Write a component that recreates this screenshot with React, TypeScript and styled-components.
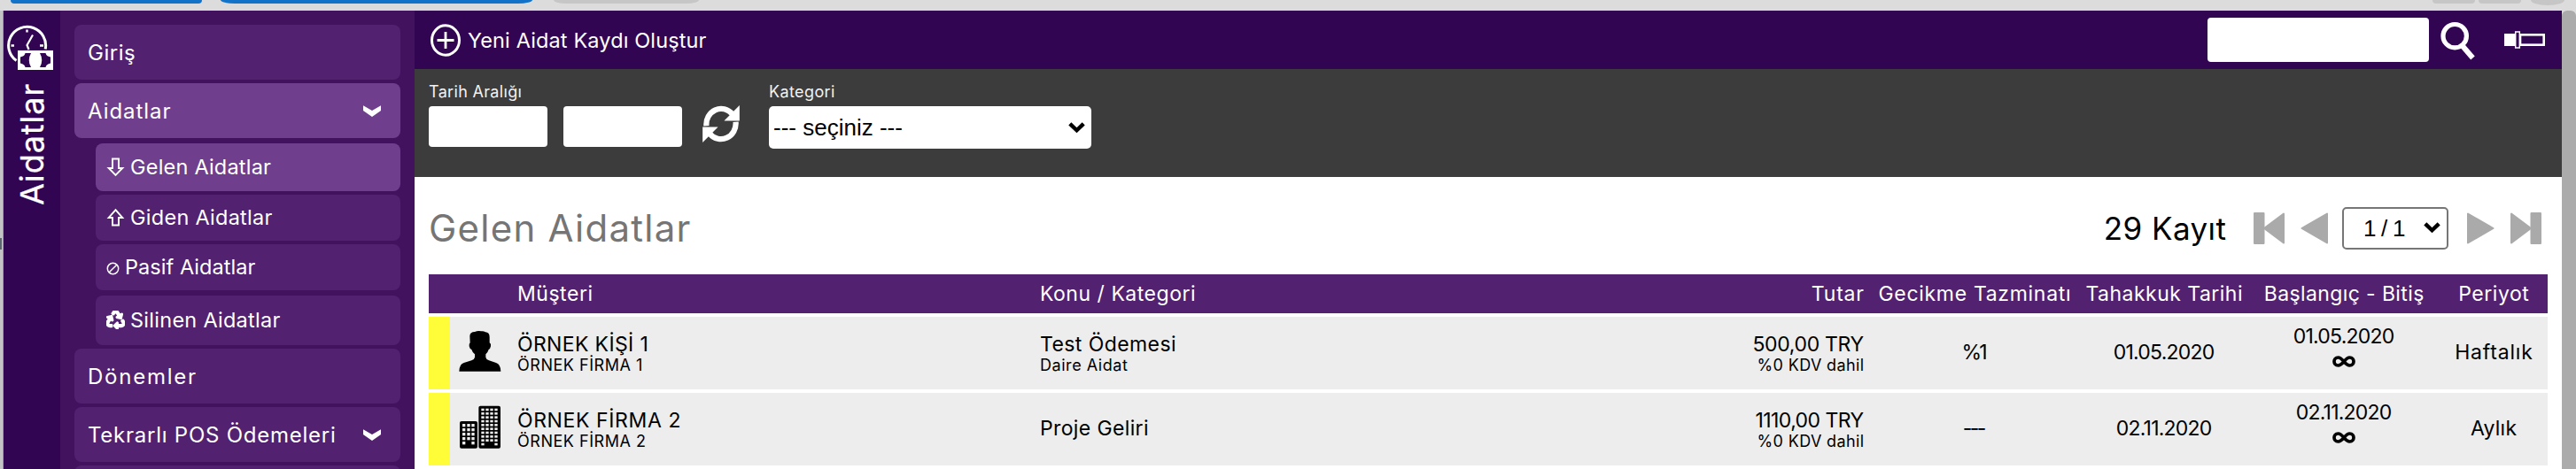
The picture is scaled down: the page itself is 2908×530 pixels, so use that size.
import React from 'react';
import styled, { createGlobalStyle } from 'styled-components';
import { FaRecycle } from 'react-icons/fa';

const GlobalStyle = createGlobalStyle`
  * { box-sizing: border-box; }
  body { margin: 0; background: #fff; font-family: Inter, 'Liberation Sans', sans-serif; }
  svg { display: block; flex: none; }
`;

const Page = styled.div`
  width: 2908px;
  height: 530px;
  overflow: hidden;
  display: flex;
  flex-direction: column;
  background: #dcdcdc;
`;

const TabStrip = styled.div`
  height: 12px;
  flex: none;
  display: flex;
  align-items: flex-start;
  padding-left: 12px;
`;

const TabEnd = styled.div<{ $w: number; $h?: number; $ml?: number; $color: string; $round: string }>`
  width: ${p => p.$w}px;
  height: ${p => p.$h ?? 4}px;
  margin-left: ${p => p.$ml ?? 0}px;
  background: ${p => p.$color};
  border-radius: ${p => p.$round};
`;

const Spacer = styled.div`
  flex: 1;
`;

const Body = styled.div`
  flex: 1;
  min-height: 0;
  display: flex;
`;

const WindowEdge = styled.div`
  width: 4px;
  padding-top: 257px;
  background: linear-gradient(90deg, #c3c3c5 0 3px, #a0a0a4 3px 4px);
`;

const EdgeMark = styled.div`
  width: 2px;
  height: 13px;
  background: #5b6570;
`;

const Rail = styled.div`
  width: 64px;
  background: #320553;
  display: flex;
  flex-direction: column;
  align-items: flex-start;
  padding: 16px 0 0 4px;
`;

const RailTitle = styled.div`
  writing-mode: vertical-rl;
  transform: rotate(180deg);
  margin: 14px 0 0 8px;
  color: #fff;
  font-size: 36px;
  line-height: 40px;
  letter-spacing: 0.97px;
  -webkit-text-stroke: 0.3px #fff;
`;

const Sidebar = styled.nav`
  width: 400px;
  background: #43125f;
  padding: 16px 16px 0;
`;

const MenuItem = styled.div<{ $active?: boolean }>`
  height: 62px;
  margin-bottom: 4px;
  padding: 0 22px 0 15px;
  border-radius: 8px;
  background: ${p => (p.$active ? '#6f3f8e' : '#522170')};
  display: flex;
  align-items: center;
  justify-content: space-between;
  color: #fff;
  font-size: 24px;
`;

const SubMenu = styled.div`
  margin: 6px 0 4px 24px;
  display: flex;
  flex-direction: column;
`;

const SubItem = styled.div<{ $active?: boolean; $h: number; $gap?: number }>`
  height: ${p => p.$h}px;
  margin-bottom: ${p => p.$gap ?? 0}px;
  padding: 0 0 1px 12px;
  border-radius: 8px;
  background: ${p => (p.$active ? '#6f3f8e' : '#522170')};
  display: flex;
  align-items: center;
  color: #fff;
  font-size: 23.5px;
`;

const SubIcon = styled.span<{ $w: number }>`
  width: ${p => p.$w}px;
`;

const Tracked = styled.span<{ $t: number }>`
  letter-spacing: ${p => p.$t}px;
  margin-right: ${p => -p.$t}px;
  white-space: nowrap;
`;

const Main = styled.main`
  width: 2424px;
  background: #fff;
`;

const TopBar = styled.header`
  height: 66px;
  padding: 0 19px 0 17px;
  background: #320553;
  display: flex;
  align-items: center;
  color: #fff;
`;

const CreateLink = styled.div`
  display: flex;
  align-items: center;
  gap: 8px;
  font-size: 23.5px;
`;

const Field = styled.div<{ $w: number; $h: number }>`
  width: ${p => p.$w}px;
  height: ${p => p.$h}px;
  border-radius: 4px;
  background: #fff;
`;

const SearchIcon = styled.div`
  margin: 2px 32px 0 13px;
`;

const FilterBar = styled.section`
  height: 122px;
  padding: 16px 16px 0;
  background: #3c3c3c;
  display: flex;
  color: #f2f2f2;
`;

const FilterGroup = styled.div`
  margin-right: 33px;
`;

const FilterLabel = styled.div`
  height: 26px;
  line-height: 20px;
  font-size: 18px;
`;

const Fields = styled.div`
  display: flex;
  gap: 18px;
`;

const RefreshIcon = styled.div`
  margin: -1px 0 0 5px;
`;

const Select = styled.div<{ $w: number; $bordered?: boolean }>`
  width: ${p => p.$w}px;
  height: 48px;
  padding: 0 7px 0 ${p => (p.$bordered ? 22 : 5)}px;
  border: ${p => (p.$bordered ? '2px solid #767676' : '0')};
  border-radius: 5px;
  background: #fff;
  display: flex;
  align-items: center;
  justify-content: space-between;
  color: #000;
  font: 26px/44px 'Liberation Sans', sans-serif;
`;

const TitleRow = styled.div`
  height: 110px;
  padding: 5px 23px 0 16px;
  display: flex;
  align-items: center;
`;

const Title = styled.h1`
  margin: 0;
  flex: 1;
  font-size: 42px;
  font-weight: 400;
  color: #757575;
`;

const Count = styled.div`
  font-size: 35px;
  margin-right: 31px;
`;

const Pager = styled.div`
  display: flex;
  align-items: center;
`;

const PagerButton = styled.span<{ $mr: number }>`
  margin-right: ${p => p.$mr}px;
`;

const Table = styled.div`
  margin: 0 16px;
  display: flex;
  flex-direction: column;
  gap: 4px;
`;

const TableRow = styled.div<{ $head?: boolean }>`
  height: ${p => (p.$head ? 44 : 82)}px;
  background: ${p => (p.$head ? '#522170' : '#ededed')};
  color: ${p => (p.$head ? '#fff' : '#000')};
  display: grid;
  grid-template-columns: 24px 76px 590px 589px 341px 250px 178px 228px 110px;
  font-size: 23px;
`;

const Marker = styled.div<{ $on?: boolean }>`
  background: ${p => (p.$on ? '#fffd38' : 'transparent')};
`;

const IconCell = styled.div`
  display: flex;
  align-items: center;
  padding: 0 0 5px 10px;
`;

const Cell = styled.div<{ $align?: string; $shift?: number }>`
  display: flex;
  flex-direction: column;
  justify-content: center;
  align-items: ${p => p.$align ?? 'flex-start'};
  line-height: 28px;
  padding-top: ${p => Math.max(0, p.$shift ?? 0)}px;
  padding-bottom: ${p => Math.max(0, -(p.$shift ?? 0))}px;
`;

const Small = styled.div`
  font-size: 18px;
  line-height: 20px;
`;

const Infinite = styled.div`
  height: 30px;
  display: flex;
  align-items: center;
`;

const Scrollbar = styled.div`
  width: 16px;
  border-radius: 6px 6px 0 0;
  background: #ababab;
`;

const T = ({ t, children }: { t: number; children: React.ReactNode }) => <Tracked $t={t}>{children}</Tracked>;

const MenuChevron = () => (
  <svg width="20" height="13" viewBox="0 0 60 39" fill="#fff">
    <path d="M0 1 30 18 60 1V18L30 39 0 18Z" />
  </svg>
);

const SelectChevron = () => (
  <svg width="19" height="13" viewBox="0 0 19 13" fill="none" stroke="#000" strokeWidth="4.4">
    <path d="M1.8 1.8 9.5 9.3 17.2 1.8" />
  </svg>
);

const ClockMoney = () => (
  <svg width="52" height="52" viewBox="0 0 52 52" fill="none" stroke="#fff">
    <path d="M10.5 40.5A21 21 0 1 1 43.2 27.5" strokeWidth="3" />
    <path d="M22.5 5.5v3M4.5 23.5h3.5M37 23.5h4" strokeWidth="2.4" />
    <path d="M29 11.5 22.5 23 24.5 28" strokeWidth="2.2" />
    <rect x="12" y="29" width="40" height="22" fill="#fff" stroke="none" />
    <path d="M20.5 32H27Q22.5 40 27 48H20.5Q20 44.5 15 43.5V36.500Q20 35.5 20.5 32Z" fill="#320553" stroke="none" />
    <path d="M43.5 32H37Q41.5 40 37 48H43.5Q44 44.5 49 43.5V36.500Q44 35.5 43.5 32Z" fill="#320553" stroke="none" />
  </svg>
);

const PlusCircle = () => (
  <svg width="35" height="37" viewBox="0 0 35 37" fill="none" stroke="#fff">
    <ellipse cx="18" cy="18.5" rx="15.5" ry="16.7" strokeWidth="3" />
    <path d="M18 9v19M8.500 18.5h19" strokeWidth="2.8" />
  </svg>
);

const Refresh = () => (
  <svg width="42" height="42" viewBox="0 0 127 128" fill="none" stroke="#fff">
    <path d="M13 71A51 54 0 0 1 102 30M114 57A51 54 0 0 1 25 98" strokeWidth="19" />
    <path d="M127 0V53H74ZM0 128V75H53Z" fill="#fff" stroke="none" />
  </svg>
);

const Magnifier = () => (
  <svg width="40" height="44" viewBox="0 0 40 44" fill="none" stroke="#fff">
    <circle cx="16.2" cy="16.7" r="13.2" strokeWidth="5.2" />
    <path d="M24.5 27.5 36.5 41.5" strokeWidth="6" />
  </svg>
);

const SliderIcon = () => (
  <svg width="46" height="20" viewBox="0 0 46 20" fill="none" stroke="#fff">
    <rect x="0" y="3" width="13" height="14" fill="#fff" stroke="none" />
    <rect x="18" y="4.3" width="26.7" height="11.4" strokeWidth="2.6" />
    <rect x="12.7" y="1" width="4.6" height="18" fill="#320553" strokeWidth="1.5" />
  </svg>
);

const HollowArrow = ({ up }: { up?: boolean }) => (
  <svg width="21" height="22" viewBox="0 0 21 22" fill="none" stroke="#fff" strokeWidth="1.9">
    <path d={up ? 'M10.5 2.2 18.3 11H14V19.5H7V11H2.7Z' : 'M10.5 19.8 18.3 12H14V1.5H7V12H2.7Z'} />
  </svg>
);

const Slashed = () => (
  <svg width="15" height="18" viewBox="0 0 15 18" fill="none" stroke="#fff" strokeWidth="1.5">
    <circle cx="7.5" cy="10.5" r="6.2" />
    <path d="M3.2 14.8 11.8 6.2" />
  </svg>
);

const PagerArrow = ({ kind }: { kind: 'first' | 'prev' | 'next' | 'last' }) => {
  const bar = kind === 'first' || kind === 'last';
  const w = bar ? 35 : 31;
  const flip = kind === 'next' || kind === 'last';
  return (
    <svg width={w} height="36" viewBox={`0 0 ${w} 36`} fill="#aaa" stroke="#aaa" strokeLinejoin="round">
      <g transform={flip ? `translate(${w} 0) scale(-1 1)` : undefined}>
        {bar ? (
          <>
            <path d="M1 1H11.5V35H1Z" strokeWidth="2" />
            <path d="M34 1.5V34.5L12 18Z" strokeWidth="2" />
          </>
        ) : (
          <path d="M30 1.5V34.5L1.5 18Z" strokeWidth="2" />
        )}
      </g>
    </svg>
  );
};

const Person = () => (
  <svg width="48" height="48" viewBox="0 0 144 144" fill="#000">
    <path d="M37 20Q38 6 54 6Q64 1 76 4Q84 3 90 7Q104 8 104 24V43Q110 46 108 55Q106 65 101 66Q98 76 91 82V92Q92 99 102 103L126 111Q142 117 142 140H1Q1 117 17 111L43 103Q53 99 54 92V82Q46 76 43 66Q37 65 35 55Q34 46 38 43Z" />
  </svg>
);

const rowsOf = (n: number, start: number, step: number) => Array.from({ length: n }, (_, i) => start + i * step);

const Buildings = () => (
  <svg width="48" height="50" viewBox="0 0 144 150">
    <rect x="3" y="54" width="60" height="92" rx="6" />
    <rect x="67" y="2" width="74" height="144" rx="6" />
    <g fill="#ededed">
      {[12, 28, 43].flatMap(x =>
        rowsOf(x === 28 ? 4 : 5, 63, 15).map(y => <rect key={`${x}-${y}`} x={x} y={y} width="10" height="10" />),
      )}
      {[76, 91, 106, 121].flatMap(x =>
        rowsOf(x === 91 || x === 106 ? 9 : 10, 11, 13).map(y => (
          <rect key={`${x}-${y}`} x={x} y={y} width="10" height="8" />
        )),
      )}
    </g>
  </svg>
);

const InfinitySign = () => (
  <svg width="26" height="13" viewBox="0 0 26 13" fill="none" stroke="#000" strokeWidth="3.7">
    <path d="M13 6.5C10.5 3.5 9 2 6.5 2C0.5 2 0.5 11 6.5 11C9 11 10.5 9.5 13 6.5C15.5 3.5 17 2 19.5 2C25.5 2 25.5 11 19.5 11C17 11 15.5 9.5 13 6.5Z" />
  </svg>
);

type Entry = {
  icon: React.ReactNode;
  name: [string, number];
  firm: string;
  subject: [string, number];
  category?: string;
  amount: [string, number];
  penalty: [string, number];
  date: [string, number];
  period: [string, number];
};

const entries: Entry[] = [
  {
    icon: <Person />,
    name: ['ÖRNEK KİŞİ 1', 0.36],
    firm: 'ÖRNEK FİRMA 1',
    subject: ['Test Ödemesi', 0.42],
    category: 'Daire Aidat',
    amount: ['500,00 TRY', -0.34],
    penalty: ['%1', -2.8],
    date: ['01.05.2020', -0.77],
    period: ['Haftalık', 0.8],
  },
  {
    icon: <Buildings />,
    name: ['ÖRNEK FİRMA 2', 0.61],
    firm: 'ÖRNEK FİRMA 2',
    subject: ['Proje Geliri', 0.37],
    amount: ['1110,00 TRY', -0.56],
    penalty: ['---', -2.5],
    date: ['02.11.2020', -0.79],
    period: ['Aylık', 0.25],
  },
];

export default function App() {
  return (
    <Page>
      <GlobalStyle />
      <TabStrip>
        <TabEnd $w={216} $color="#1273c8" $round="0 0 5px 5px" />
        <TabEnd $w={352} $ml={21} $color="#1273c8" $round="0 0 16px 16px / 0 0 4px 4px" />
        <TabEnd $w={164} $ml={24} $color="#c6c6c6" $round="0 0 14px 14px / 0 0 4px 4px" />
        <Spacer />
        <TabEnd $w={48} $color="#c6c6c6" $round="0 0 5px 5px" />
        <TabEnd $w={48} $ml={4} $color="#c6c6c6" $round="0 0 5px 5px" />
        <TabEnd $w={38} $h={6} $ml={11} $color="#c6c6c6" $round="0 0 19px 19px / 0 0 6px 6px" />
        <TabEnd $w={13} $color="transparent" $round="0" />
      </TabStrip>
      <Body>
        <WindowEdge>
          <EdgeMark />
        </WindowEdge>
        <Rail>
          <ClockMoney />
          <RailTitle>Aidatlar</RailTitle>
        </Rail>
        <Sidebar>
          <MenuItem><T t={0.51}>Giriş</T></MenuItem>
          <MenuItem $active><T t={0.96}>Aidatlar</T><MenuChevron /></MenuItem>
          <SubMenu>
            <SubItem $active $h={54} $gap={4}><SubIcon $w={27}><HollowArrow /></SubIcon><T t={0.21}>Gelen Aidatlar</T></SubItem>
            <SubItem $h={52} $gap={4}><SubIcon $w={27}><HollowArrow up /></SubIcon><T t={0.27}>Giden Aidatlar</T></SubItem>
            <SubItem $h={52} $gap={6}><SubIcon $w={21}><Slashed /></SubIcon><T t={0.05}>Pasif Aidatlar</T></SubItem>
            <SubItem $h={56}><SubIcon $w={27}><FaRecycle size={21} stroke="#fff" strokeWidth={40} /></SubIcon><T t={0.27}>Silinen Aidatlar</T></SubItem>
          </SubMenu>
          <MenuItem><T t={1.76}>Dönemler</T></MenuItem>
          <MenuItem><T t={0.75}>Tekrarlı POS Ödemeleri</T><MenuChevron /></MenuItem>
          <MenuItem />
        </Sidebar>
        <Main>
          <TopBar>
            <CreateLink><PlusCircle /><T t={0.13}>Yeni Aidat Kaydı Oluştur</T></CreateLink>
            <Spacer />
            <Field $w={250} $h={50} />
            <SearchIcon><Magnifier /></SearchIcon>
            <SliderIcon />
          </TopBar>
          <FilterBar>
            <FilterGroup>
              <FilterLabel><T t={0.33}>Tarih Aralığı</T></FilterLabel>
              <Fields>
                <Field $w={134} $h={46} />
                <Field $w={134} $h={46} />
                <RefreshIcon><Refresh /></RefreshIcon>
              </Fields>
            </FilterGroup>
            <FilterGroup>
              <FilterLabel><T t={0.39}>Kategori</T></FilterLabel>
              <Select $w={364}>--- seçiniz ---<SelectChevron /></Select>
            </FilterGroup>
          </FilterBar>
          <TitleRow>
            <Title><T t={1.25}>Gelen Aidatlar</T></Title>
            <Count><T t={0.45}>29 Kayıt</T></Count>
            <Pager>
              <PagerButton $mr={18}><PagerArrow kind="first" /></PagerButton>
              <PagerButton $mr={16}><PagerArrow kind="prev" /></PagerButton>
              <PagerButton $mr={21}><Select $w={120} $bordered><T t={-0.8}>1 / 1</T><SelectChevron /></Select></PagerButton>
              <PagerButton $mr={18}><PagerArrow kind="next" /></PagerButton>
              <PagerArrow kind="last" />
            </Pager>
          </TitleRow>
          <Table>
            <TableRow $head>
              <Marker />
              <IconCell />
              <Cell><T t={0.53}>Müşteri</T></Cell>
              <Cell><T t={0.52}>Konu / Kategori</T></Cell>
              <Cell $align="flex-end"><T t={0.8}>Tutar</T></Cell>
              <Cell $align="center"><T t={0.69}>Gecikme Tazminatı</T></Cell>
              <Cell $align="center"><T t={0.48}>Tahakkuk Tarihi</T></Cell>
              <Cell $align="center"><T t={0.39}>Başlangıç - Bitiş</T></Cell>
              <Cell $align="center"><T t={0.53}>Periyot</T></Cell>
            </TableRow>
            {entries.map(e => (
              <TableRow key={e.name[0]}>
                <Marker $on />
                <IconCell>{e.icon}</IconCell>
                <Cell>
                  <T t={e.name[1]}>{e.name[0]}</T>
                  <Small><T t={0.53}>{e.firm}</T></Small>
                </Cell>
                <Cell $shift={e.category ? 0 : -2}>
                  <T t={e.subject[1]}>{e.subject[0]}</T>
                  {e.category && <Small><T t={0.55}>{e.category}</T></Small>}
                </Cell>
                <Cell $align="flex-end">
                  <T t={e.amount[1]}>{e.amount[0]}</T>
                  <Small><T t={0.35}>%0 KDV dahil</T></Small>
                </Cell>
                <Cell $align="center" $shift={-2}><T t={e.penalty[1]}>{e.penalty[0]}</T></Cell>
                <Cell $align="center" $shift={-2}><T t={e.date[1]}>{e.date[0]}</T></Cell>
                <Cell $align="center" $shift={-9}>
                  <T t={e.date[1]}>{e.date[0]}</T>
                  <Infinite><InfinitySign /></Infinite>
                </Cell>
                <Cell $align="center" $shift={-2}><T t={e.period[1]}>{e.period[0]}</T></Cell>
              </TableRow>
            ))}
          </Table>
        </Main>
        <Scrollbar />
      </Body>
    </Page>
  );
}
